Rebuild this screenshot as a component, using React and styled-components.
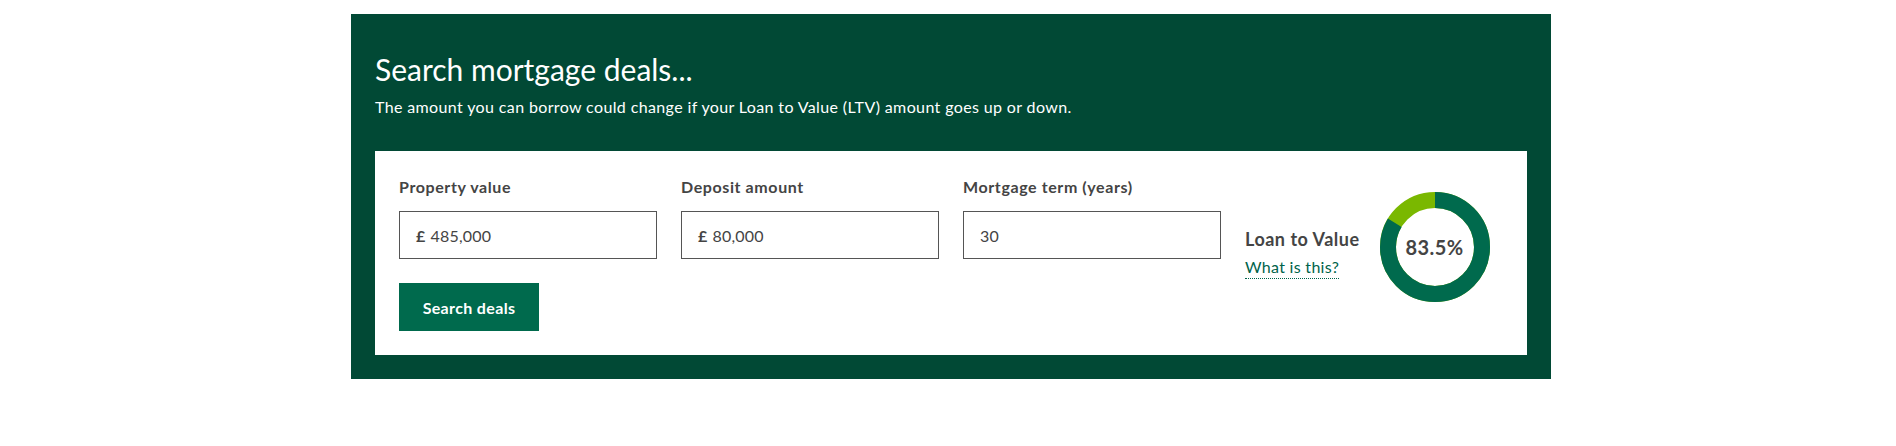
import React from 'react';
import styled, { createGlobalStyle } from 'styled-components';

const GlobalStyle = createGlobalStyle`
  body {
    margin: 0;
    background: #fff;
    font-family: Lato, "Liberation Sans", sans-serif;
  }
`;

const fields = [
  { label: 'Property value', value: '485,000', currency: true },
  { label: 'Deposit amount', value: '80,000', currency: true },
  { label: 'Mortgage term (years)', value: '30', currency: false },
];

const LTV = 83.5;

const Donut = ({ percent }) => {
  const r = 47;
  const c = 2 * Math.PI * r;
  const dark = (percent / 100) * c;
  return (
    <DonutWrap>
      <svg width="110" height="110" viewBox="0 0 110 110">
        <circle cx="55" cy="55" r={r} fill="none" stroke="#7ab800" strokeWidth="16" />
        <circle
          cx="55"
          cy="55"
          r={r}
          fill="none"
          stroke="#006a4d"
          strokeWidth="16"
          strokeDasharray={`${dark} ${c}`}
          transform="rotate(-90 55 55)"
        />
      </svg>
      <DonutLabel>{percent}%</DonutLabel>
    </DonutWrap>
  );
};

const App = () => {
  return (
    <>
      <GlobalStyle />
      <Page>
        <Panel>
          <Heading>Search mortgage deals...</Heading>
          <Intro>The amount you can borrow could change if your Loan to Value (LTV) amount goes up or down.</Intro>
          <Card>
            {fields.map((f) => (
              <Field key={f.label}>
                <Label>{f.label}</Label>
                <InputBox>
                  {f.currency && <Currency>£</Currency>}
                  <Value>{f.value}</Value>
                </InputBox>
              </Field>
            ))}
            <LtvBlock>
              <LtvText>
                <LtvTitle>Loan to Value</LtvTitle>
                <LtvLink href="#">What is this?</LtvLink>
              </LtvText>
              <Donut percent={LTV} />
            </LtvBlock>
            <ButtonRow>
              <SearchButton>Search deals</SearchButton>
            </ButtonRow>
          </Card>
        </Panel>
      </Page>
    </>
  );
};

const Page = styled.div`
  padding-top: 14px;
  display: flex;
  justify-content: center;
  padding-left: 6px;
`;

const Panel = styled.section`
  width: 1200px;
  box-sizing: border-box;
  background: #014935;
  padding: 35px 24px 24px;
  color: #fff;
`;

const Heading = styled.h2`
  margin: 0;
  font-size: 30px;
  line-height: 40px;
  font-weight: 400;
`;

const Intro = styled.p`
  margin: 6px 0 32px;
  font-size: 16px;
  line-height: 24px;
  letter-spacing: 0.37px;
`;

const Card = styled.div`
  background: #fff;
  padding: 24px;
  display: grid;
  grid-template-columns: repeat(4, 1fr);
  column-gap: 24px;
  row-gap: 24px;
  color: #444;
`;

const Field = styled.div`
  display: flex;
  flex-direction: column;
`;

const Label = styled.label`
  font-size: 16px;
  line-height: 24px;
  font-weight: 700;
  letter-spacing: 0.6px;
  margin-bottom: 12px;
`;

const InputBox = styled.div`
  height: 48px;
  box-sizing: border-box;
  border: 1px solid #555;
  display: flex;
  align-items: center;
  padding: 0 16px;
  font-size: 16px;
  letter-spacing: 0.2px;
`;

const Currency = styled.span`
  font-weight: 700;
  margin-right: 5px;
`;

const Value = styled.span`
  font-weight: 400;
`;

const ButtonRow = styled.div`
  grid-column: 1 / 2;
`;

const SearchButton = styled.button`
  height: 48px;
  width: 140px;
  border: none;
  background: #006a4d;
  color: #fff;
  font-family: inherit;
  font-size: 16px;
  font-weight: 700;
  letter-spacing: 0.35px;
  cursor: pointer;
`;

const LtvBlock = styled.div`
  grid-column: 4;
  grid-row: 1 / span 2;
  display: flex;
  align-items: flex-start;
  gap: 20px;
  padding-top: 17px;
`;

const LtvText = styled.div`
  display: flex;
  flex-direction: column;
  padding-top: 35px;
`;

const LtvTitle = styled.span`
  font-size: 18px;
  line-height: 24px;
  font-weight: 700;
  letter-spacing: 0.5px;
  white-space: nowrap;
`;

const LtvLink = styled.a`
  margin-top: 5px;
  font-size: 16px;
  line-height: 22px;
  letter-spacing: 0.3px;
  color: #00634a;
  text-decoration: none;
  border-bottom: 1px dotted #00634a;
  align-self: flex-start;
`;

const DonutWrap = styled.div`
  position: relative;
  width: 110px;
  height: 110px;
  flex-shrink: 0;
`;

const DonutLabel = styled.span`
  position: absolute;
  inset: 0;
  display: flex;
  align-items: center;
  justify-content: center;
  font-size: 20px;
  font-weight: 700;
  letter-spacing: 0.4px;
  color: #444;
`;

export default App;
